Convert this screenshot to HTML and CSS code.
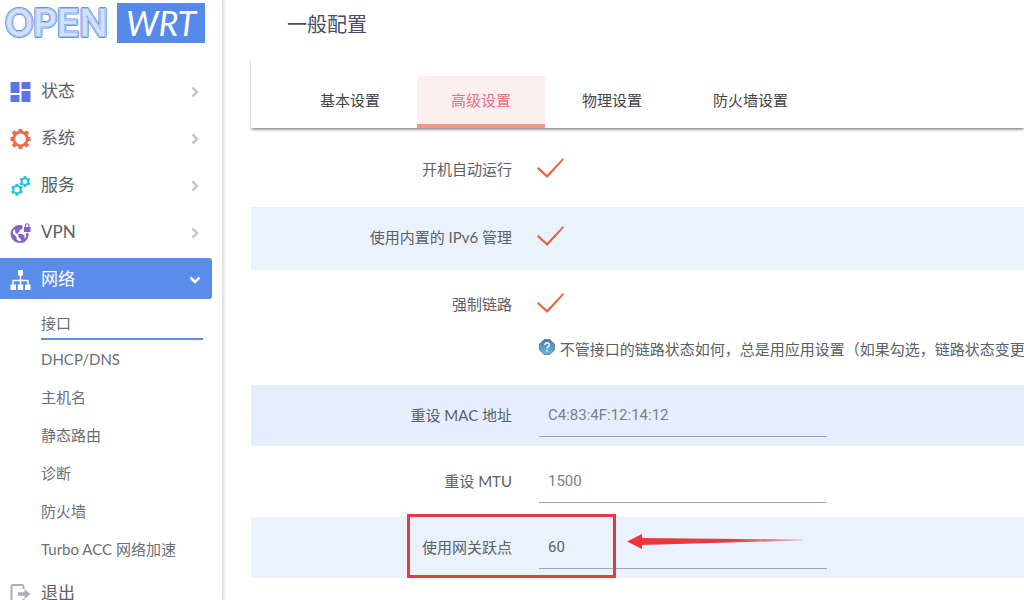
FILE: index.html
```html
<!DOCTYPE html>
<html lang="zh-CN">
<head>
<meta charset="utf-8">
<meta name="viewport" content="width=device-width, initial-scale=1">
<title>OpenWrt - 接口</title>
<link rel="stylesheet" href="styles.css">
</head>
<body>
<svg class="defs" aria-hidden="true">
  <symbol id="chevron" viewBox="0 0 12 12"><path d="M3.500 1.500 8 6l-4.500 4.500" fill="none" stroke="currentColor" stroke-width="2.500"/></symbol>
</svg>
<div class="layout">
  <aside class="sidebar">
    <a class="brand" href="#" aria-label="OpenWrt">
      <svg class="brand-open" width="110" height="40" viewBox="0 0 110 40" aria-hidden="true">
        <defs><text id="open" x="2" y="33">OPEN</text></defs>
        <use href="#open" class="ring-4"/><use href="#open" class="ring-3"/><use href="#open" class="ring-2"/><use href="#open" class="ring-1"/>
      </svg>
      <span class="brand-wrt">WRT</span>
    </a>
    <nav>
      <ul class="menu">
        <li><a class="menu-item" href="#">
          <svg class="icon blue" viewBox="0 0 20 20"><path fill="currentColor" d="M0 0h9v11H0zM11 0h9v7h-9zM0 13h9v7H0zM11 9h9v11h-9z"/></svg>
          <span>状态</span><svg class="chevron"><use href="#chevron"/></svg></a></li>
        <li><a class="menu-item" href="#">
          <svg class="icon orange" viewBox="0 0 20 20"><circle cx="10" cy="10" r="6.800" fill="none" stroke="currentColor" stroke-width="2.800"/><g stroke="currentColor" stroke-width="4"><path d="M10 0v3M10 17v3M0 10h3M17 10h3M2.600 2.600l2 2M15.400 15.400l2 2M2.600 17.400l2-2M15.400 4.600l2-2"/></g></svg>
          <span>系统</span><svg class="chevron"><use href="#chevron"/></svg></a></li>
        <li><a class="menu-item" href="#">
          <svg class="icon cyan" viewBox="0 0 20 20"><g id="gear" stroke="currentColor" fill="none"><circle cx="6.500" cy="13.700" r="3.700" stroke-width="2.200"/><path stroke-width="2.800" d="M6.500 7.700v2M6.500 17.700v2M1.300 10.700l2 1.200M9.700 15.500l2 1.200M1.300 16.700l2-1.200M9.700 11.900l2-1.200"/></g><use href="#gear" transform="translate(8.500 -7) scale(.92)"/></svg>
          <span>服务</span><svg class="chevron"><use href="#chevron"/></svg></a></li>
        <li><a class="menu-item" href="#">
          <svg class="icon purple" viewBox="0 0 20 20"><circle cx="9" cy="11" r="8" fill="none" stroke="currentColor" stroke-width="2"/><path fill="currentColor" d="M1 9l5 5v2l3 3H6C2 17 0 13 1 9zM4 5l4-3 5 1-1 3-3 1v2l-2 1v1h5l2 2v3l3-1-3 4-3 1v-3l-3-3v-2L5 10z"/><path fill="#fff" d="M12 0h8v10h-8z"/><path fill="currentColor" d="M13.500 4h6.500v5h-6.500z"/><path fill="none" stroke="currentColor" stroke-width="1.200" d="M15 4V2.500a1.700 1.700 0 0 1 3.500 0V4"/><path fill="none" stroke="currentColor" stroke-width="2" d="M16.800 10.500c.5 3-1 6.500-4.500 7.800"/></svg>
          <span>VPN</span><svg class="chevron"><use href="#chevron"/></svg></a></li>
        <li><a class="menu-item active" href="#">
          <svg class="icon" viewBox="0 0 20 20"><path fill="currentColor" d="M7.500 0h5v5.500h-5zM0 14.500h5.500V20H0zM7.300 14.500h5.400V20H7.300zM14.500 14.500H20V20h-5.500z"/><path fill="none" stroke="currentColor" stroke-width="1.500" d="M10 5v10M2.500 15v-4.500h15V15"/></svg>
          <span>网络</span><svg class="chevron open"><use href="#chevron"/></svg></a>
          <ul class="submenu">
            <li><a class="current" href="#">接口</a></li>
            <li><a href="#">DHCP/DNS</a></li>
            <li><a href="#">主机名</a></li>
            <li><a href="#">静态路由</a></li>
            <li><a href="#">诊断</a></li>
            <li><a href="#">防火墙</a></li>
            <li><a href="#">Turbo ACC 网络加速</a></li>
          </ul></li>
        <li><a class="menu-item" href="#">
          <svg class="icon gray" viewBox="0 0 20 20"><path fill="none" stroke="currentColor" stroke-width="2" d="M13 5V2.500Q13 1 11.500 1h-9Q1 1 1 2.500v15Q1 19 2.500 19h9q1.500 0 1.500-1.500V15"/><path fill="currentColor" d="M7.500 8.300H14V5l6 5-6 5v-3.300H7.500z"/></svg>
          <span>退出</span></a></li>
      </ul>
    </nav>
  </aside>
  <main class="main">
    <h1 class="title">一般配置</h1>
    <nav class="tabs">
      <a class="tab" href="#">基本设置</a>
      <a class="tab selected" href="#">高级设置</a>
      <a class="tab" href="#">物理设置</a>
      <a class="tab" href="#">防火墙设置</a>
    </nav>
    <form class="form">
      <div class="row toggle">
        <label class="label" for="auto">开机自动运行</label>
        <input class="check" type="checkbox" id="auto" checked>
      </div>
      <div class="row toggle striped">
        <label class="label" for="ipv6">使用内置的 IPv6 管理</label>
        <input class="check" type="checkbox" id="ipv6" checked>
      </div>
      <div class="row toggle with-hint">
        <label class="label" for="force">强制链路</label>
        <div class="field">
          <input class="check" type="checkbox" id="force" checked>
          <p class="hint">
            <svg class="help" viewBox="0 0 16 16" aria-hidden="true"><defs><linearGradient id="helpfill" x2="0" y2="1"><stop stop-color="#4381b5"/><stop offset="1" stop-color="#68b5ea"/></linearGradient></defs><path d="M5 .7h6L15.300 5v6L11 15.300H5L.7 11V5z" fill="url(#helpfill)" stroke="#55738f"/><path d="M5.800 6c0-3 4.700-2.700 4.500 0C10.200 7.700 8 7.600 8 9.500M8 11v1.600" fill="none" stroke="#e6f5ff" stroke-width="1.600"/></svg>
            不管接口的链路状态如何，总是用应用设置（如果勾选，链路状态变更将
          </p>
        </div>
      </div>
      <div class="row striped deep">
        <label class="label" for="mac">重设 MAC 地址</label>
        <input class="input" type="text" id="mac" placeholder="C4:83:4F:12:14:12">
      </div>
      <div class="row">
        <label class="label" for="mtu">重设 MTU</label>
        <input class="input" type="text" id="mtu" placeholder="1500">
      </div>
      <div class="row striped">
        <label class="label" for="metric">使用网关跃点</label>
        <input class="input" type="text" id="metric" value="60">
        <span class="callout"></span>
        <svg class="arrow" viewBox="0 0 176 16" aria-hidden="true"><defs><linearGradient id="fade"><stop stop-color="#f53337"/><stop offset=".6" stop-color="#df3d43"/><stop offset="1" stop-color="#df3d43" stop-opacity=".3"/></linearGradient></defs><path fill="url(#fade)" d="M0 7.500 15 0v4L176 5.500v1L15 11v4z"/></svg>
      </div>
    </form>
  </main>
</div>
</body>
</html>
```

FILE: styles.css
```css
* { box-sizing: border-box; }
body {
  margin: 0;
  background: #fff;
  color: #5b6166;
  font: 15px/24px Lato, "Noto Sans CJK SC", sans-serif;
}
ul { list-style: none; margin: 0; padding: 0; }
a { color: inherit; text-decoration: none; }
.defs { position: absolute; width: 0; height: 0; }
.layout { display: flex; height: 100vh; overflow: hidden; }

.sidebar {
  flex: 0 0 223px;
  overflow-y: auto;
  scrollbar-width: none;
  border-right: 1px solid #dcdde0;
  box-shadow: 1px 0 3px rgba(0, 0, 0, .16);
}
.brand { display: flex; gap: 4px; padding: 3px 0 0 3px; height: 70px; }
.brand-open { font: 500 37px Inter, sans-serif; stroke-linejoin: round; }
.ring-4 { stroke: #6394e6; stroke-width: 4px; fill: #fff; }
.ring-3 { stroke: #e6eefc; stroke-width: 2px; fill: #fff; }
.ring-2 { stroke: #6394e6; stroke-width: 1px; fill: #fff; }
.ring-1 { stroke: none; fill: #d3e1fa; }
.brand-wrt {
  width: 88px;
  height: 40px;
  background: #558aeb;
  color: #fff;
  font: italic 400 34px/40px Lato, sans-serif;
  text-align: center;
}

.menu-item {
  display: flex;
  align-items: center;
  height: 41px;
  margin: 0 10px 6px 0;
  padding: 0 11px 0 10px;
  gap: 10px;
  border-radius: 0 3px 3px 0;
  font-size: 17px;
}
.menu-item.active { background: #5a8ceb; color: #fff; }
.icon { flex: none; width: 21px; height: 20px; margin-top: 3px; }
.blue { color: #5e72e4; }
.orange { color: #ee6a4b; }
.cyan { color: #27c4da; }
.purple { color: #8462cc; }
.gray { color: #a9b1b8; }
.chevron { width: 12px; height: 12px; margin: 3px 0 0 auto; color: #c3c9ce; }
.chevron.open { color: #fff; transform: rotate(90deg); }

.submenu { margin: -2px 0 3px; padding: 0 19px 0 41px; color: #6b6f73; }
.submenu li { height: 38px; }
.submenu a { display: block; padding-top: 6px; }
.submenu .current { padding: 8px 0 3px; border-bottom: 2px solid #5a8ceb; }

.main { flex: 1; min-width: 0; padding-left: 28px; overflow-y: auto; scrollbar-width: none; }
.title {
  margin: 0;
  padding: 8px 0 18px 36px;
  color: #4b4a6b;
  font-size: 20px;
  font-weight: 400;
  line-height: 32px;
}
.tabs {
  display: flex;
  gap: 3px;
  padding: 18px 0 0 35px;
  box-shadow: 0 2px 3px -1px rgba(0, 0, 0, .5), 0 2px 2px rgba(0, 0, 0, .12);
  color: #444;
}
.tab { padding: 12px 34px; border-bottom: 4px solid transparent; white-space: nowrap; }
.tab.selected { background: #fcefef; border-color: #f29784; color: #e1727f; }

.form { display: flex; flex-direction: column; gap: 5px; padding: 11px 0 20px; }
.row {
  position: relative;
  display: flex;
  align-items: flex-start;
  gap: 27px;
  padding: 8px 0 9px;
}
.row.toggle { padding: 9px 0 10px; }
.row.with-hint { padding: 8px 0 19px; }
.striped { background: #eaf2fd; }
.striped.deep { background: #e4eefe; }
.label { flex: 0 0 261px; line-height: 44px; text-align: right; }
.toggle .label { line-height: 42px; height: 44px; }
.field { flex: 1; min-width: 0; }
.check {
  appearance: none;
  display: block;
  width: 27px;
  height: 20px;
  margin: 10px 0 0 -2px;
  background: #e5653f;
  clip-path: polygon(0 54%, 5% 45%, 37% 84%, 96% 0, 100% 8%, 38% 100%);
}
.hint { margin: 24px 0 0; white-space: nowrap; overflow: hidden; }
.help { width: 16px; height: 16px; margin: 0 1px 0 0; vertical-align: 0; }
.input {
  width: 288px;
  height: 44px;
  padding: 0 9px;
  border: 0;
  border-bottom: 1px solid #9da5ae;
  background: transparent;
  color: #5f6368;
  font: 15px Roboto, sans-serif;
  outline: 0;
}
.input::placeholder { color: #7b8085; opacity: 1; }
.callout {
  position: absolute;
  top: -3px;
  left: 156px;
  width: 209px;
  height: 64px;
  border: 3px solid #df3d41;
}
.arrow { position: absolute; top: 17px; left: 376px; width: 176px; height: 16px; }
```
